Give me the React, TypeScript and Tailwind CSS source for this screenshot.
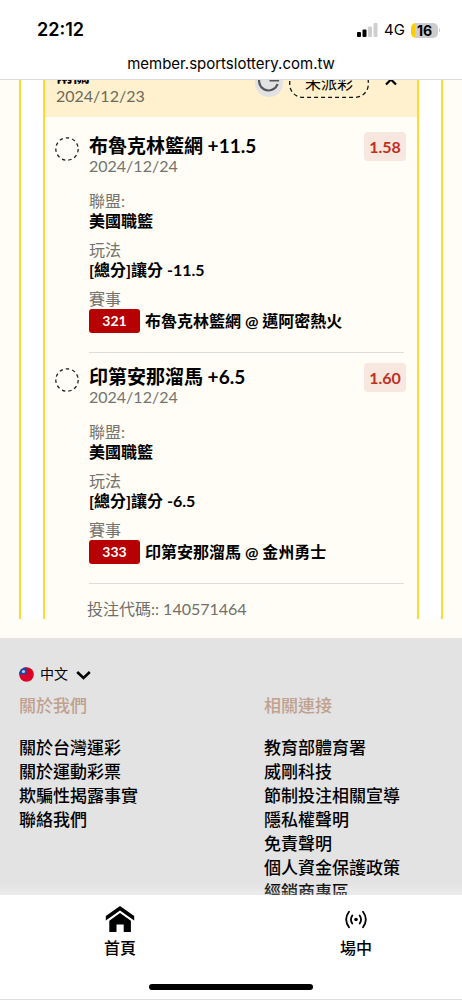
interface Bet {
  id: string
  title: string
  date: string
  odds: string
  league: string
  play: string
  match: string
}

const BETS: Bet[] = [
  {
    id: '321',
    title: '布魯克林籃網 +11.5',
    date: '2024/12/24',
    odds: '1.58',
    league: '美國職籃',
    play: '[總分]讓分 -11.5',
    match: '布魯克林籃網 @ 邁阿密熱火'
  },
  {
    id: '333',
    title: '印第安那溜馬 +6.5',
    date: '2024/12/24',
    odds: '1.60',
    league: '美國職籃',
    play: '[總分]讓分 -6.5',
    match: '印第安那溜馬 @ 金州勇士'
  }
]

const FOOTER_COLUMNS = [
  {
    heading: '關於我們',
    links: ['關於台灣運彩', '關於運動彩票', '欺騙性揭露事實', '聯絡我們']
  },
  {
    heading: '相關連接',
    links: ['教育部體育署', '威剛科技', '節制投注相關宣導', '隱私權聲明', '免責聲明', '個人資金保護政策', '經銷商專區']
  }
]

export default function App() {
  return (
    <div className="flex h-screen flex-col overflow-hidden bg-white font-['Lato','Noto_Sans_CJK_TC',sans-serif] text-black">
      <StatusBar />
      <main className="relative min-h-0 flex-1 overflow-hidden bg-[#fffdf5]">
        {/* Page is scrolled, the top of the ticket sits under the address bar */}
        <div className="-mt-[25px]">
          <Ticket />
          <SiteFooter />
        </div>
        <div className="absolute inset-x-0 bottom-0 h-3 bg-linear-to-b from-transparent to-white/30" />
      </main>
      <BottomNav />
    </div>
  )
}

function StatusBar() {
  return (
    <header className="shrink-0 border-b border-[#dcdcdc] bg-white font-['Inter',sans-serif]">
      <div className="flex h-12 items-center justify-between pt-3 pr-[22px] pl-[37px]">
        <span className="text-lg leading-6 font-semibold">22:12</span>
        <div className="flex items-center gap-[6px]">
          <svg width="21" height="14" viewBox="0 0 21 14" aria-hidden="true">
            <rect x="0" y="9" width="4" height="5" rx="1" />
            <rect x="5.5" y="6.5" width="4" height="7.5" rx="1" />
            <rect x="11" y="3.5" width="4" height="10.5" rx="1" fill="#cfcfcf" />
            <rect x="16.5" y="0" width="4" height="14" rx="1" fill="#cfcfcf" />
          </svg>
          <span className="text-[15px] leading-6">4G</span>
          <div className="flex items-center gap-px">
            <span className="h-[15px] w-[27px] rounded-[5px] bg-linear-to-r from-[#ffcc00] from-16% to-[#cccccc] to-16% text-center text-sm leading-[15px] font-bold">
              16
            </span>
            <span className="h-1 w-px rounded-r bg-[#cccccc]" />
          </div>
        </div>
      </div>
      <p className="h-[31px] pt-1 text-center text-[15px] leading-6">member.sportslottery.com.tw</p>
    </header>
  )
}

function Ticket() {
  return (
    <div className="px-[19px] pb-[19px]">
      <div className="border-x-2 border-[#ffda33] bg-white px-[22px]">
        <section className="border-x-2 border-[#ffda33] bg-[#fffdf5]">
          <div className="flex items-start justify-between bg-[#fff1cd] pt-[11px] pr-[19px] pb-[11px] pl-[11px]">
            <div>
              <h2 className="text-[17px] leading-5 font-bold">兩關</h2>
              <p className="text-base leading-5 text-[#6e695a]">2024/12/23</p>
            </div>
            <div className="flex h-[34px] items-center">
              <button type="button" aria-label="重新整理" className="mr-[6px] rounded-full bg-[#e2e2e4]">
                <svg width="28" height="28" viewBox="0 0 28 28" fill="none" stroke="#555" strokeWidth="2.2">
                  <path d="M21 6A9.5 9.5 0 1 0 22.600 15M14.500 11.500H23V4" />
                </svg>
              </button>
              <DashedPill label="未派彩" />
              <button type="button" aria-label="收合" className="ml-[15px]">
                <svg width="14" height="14" viewBox="0 0 14 14" fill="none" stroke="#000" strokeWidth="2.2">
                  <path d="M2 8.5 7 3.500 12 8.500" />
                </svg>
              </button>
            </div>
          </div>
          <div className="pt-[5px]">
            {BETS.map((bet) => (
              <BetItem key={bet.id} bet={bet} />
            ))}
          </div>
          <p className="pt-[15px] pl-[42px] text-base leading-5 text-[#6f6f6b]">投注代碼:: 140571464</p>
        </section>
      </div>
    </div>
  )
}

function DashedPill({ label }: { label: string }) {
  return (
    <div className="relative flex h-[30px] w-20 items-center justify-center">
      <svg className="absolute inset-0" width="80" height="30" viewBox="0 0 80 30" fill="none" stroke="#111" aria-hidden="true">
        <rect x="0.7" y="0.7" width="78.6" height="28.6" rx="13" strokeWidth="1.3" strokeDasharray="4 3" />
      </svg>
      <span className="text-base leading-6">{label}</span>
    </div>
  )
}

function BetItem({ bet }: { bet: Bet }) {
  return (
    <article className="flex gap-[10px] pt-[14px] pr-[13px] pl-[10px]">
      <svg className="mt-px shrink-0" width="24" height="24" viewBox="0 0 24 24" fill="none" stroke="#222" aria-hidden="true">
        <circle cx="12" cy="12" r="11.2" strokeWidth="1.3" strokeDasharray="3.4 3" />
      </svg>
      <div className="min-w-0 flex-1 border-b border-[#dfddd7] pb-[19px]">
        <div className="flex h-10 items-start justify-between">
          <div>
            <h3 className="text-[19px] leading-5 font-bold">{bet.title}</h3>
            <p className="text-base leading-5 text-[#73736f]">{bet.date}</p>
          </div>
          <span className="-mt-1 -mr-0.5 h-[29px] w-[42px] rounded-[4px] bg-[#f8e7df] text-center text-base leading-[29px] font-bold text-[#bf2f24]">
            {bet.odds}
          </span>
        </div>
        <dl className="mt-[15px] flex flex-col gap-[9px] text-base leading-5">
          <Detail label="聯盟:" value={bet.league} />
          <Detail label="玩法" value={bet.play} />
          <div>
            <dt className="text-[#73736f]">賽事</dt>
            <dd className="flex items-center gap-[5px] font-bold">
              <span className="w-[51px] rounded-[3px] bg-[#b70000] text-center text-sm leading-6 text-white">{bet.id}</span>
              <span>{bet.match}</span>
            </dd>
          </div>
        </dl>
      </div>
    </article>
  )
}

function Detail({ label, value }: { label: string; value: string }) {
  return (
    <div>
      <dt className="text-[#73736f]">{label}</dt>
      <dd className="font-bold">{value}</dd>
    </div>
  )
}

function SiteFooter() {
  return (
    <footer className="bg-[#e3e3e3] px-[19px] pt-6 pb-10">
      <button type="button" className="flex h-6 items-center text-sm leading-6">
        <svg width="15" height="15" viewBox="0 0 15 15" aria-hidden="true">
          <circle cx="7.5" cy="7.5" r="7.3" fill="#dc0028" />
          <path d="M7.5 7.5H.2A7.3 7.3 0 0 1 7.5.2Z" fill="#1049a8" />
          <circle cx="4.5" cy="4.5" r="1.6" fill="#a9d4f3" />
        </svg>
        <span className="mr-2 ml-[6px]">中文</span>
        <svg width="15" height="15" viewBox="0 0 15 15" fill="none" stroke="#000" strokeWidth="2.6" aria-hidden="true">
          <path d="M1.2 5 7.5 11 13.8 5" />
        </svg>
      </button>
      <div className="mt-2 grid grid-cols-2 gap-x-[66px]">
        {FOOTER_COLUMNS.map((column) => (
          <nav key={column.heading} aria-label={column.heading}>
            <h4 className="mb-[18px] text-[17px] leading-6 font-medium text-[#bfa18f]">{column.heading}</h4>
            <ul>
              {column.links.map((link) => (
                <li key={link}>
                  <a href="#" className="block text-[17px] leading-6 font-medium whitespace-nowrap">
                    {link}
                  </a>
                </li>
              ))}
            </ul>
          </nav>
        ))}
      </div>
    </footer>
  )
}

function BottomNav() {
  return (
    <div className="flex h-[105px] shrink-0 flex-col justify-between border-b border-[#dedede] bg-white">
      <nav className="-mr-3 grid grid-cols-2 pt-[10px] pl-[2px]">
        <a href="#" className="flex flex-col items-center text-base leading-6 font-medium">
          <svg width="30" height="28" viewBox="0 0 30 28" aria-hidden="true">
            <path d="M15 1 .8 11v4.6L15 5.4l14.2 10.200V11Z" />
            <path d="M15 8 4.300 15.700V27h7.200v-7.500h7.200V27h7.200V15.700Z" />
          </svg>
          <span className="mt-[3px]">首頁</span>
        </a>
        <a href="#" className="flex flex-col items-center text-base leading-6 font-medium">
          <svg width="24" height="28" viewBox="0 0 24 28" fill="none" stroke="#000" strokeWidth="1.8" strokeLinecap="round" aria-hidden="true">
            <circle cx="12" cy="14.5" r="1.8" fill="#000" stroke="none" />
            <path d="M8.3 10.5Q5.6 14.5 8.3 18.5M15.7 10.5Q18.4 14.5 15.7 18.5M5 6.8Q-.7 14.5 5 22.2M19 6.8Q24.7 14.5 19 22.2" />
          </svg>
          <span className="mt-[3px]">場中</span>
        </a>
      </nav>
      <div className="mb-[9px] h-[6px] w-[164px] self-center rounded-full bg-black" />
    </div>
  )
}
